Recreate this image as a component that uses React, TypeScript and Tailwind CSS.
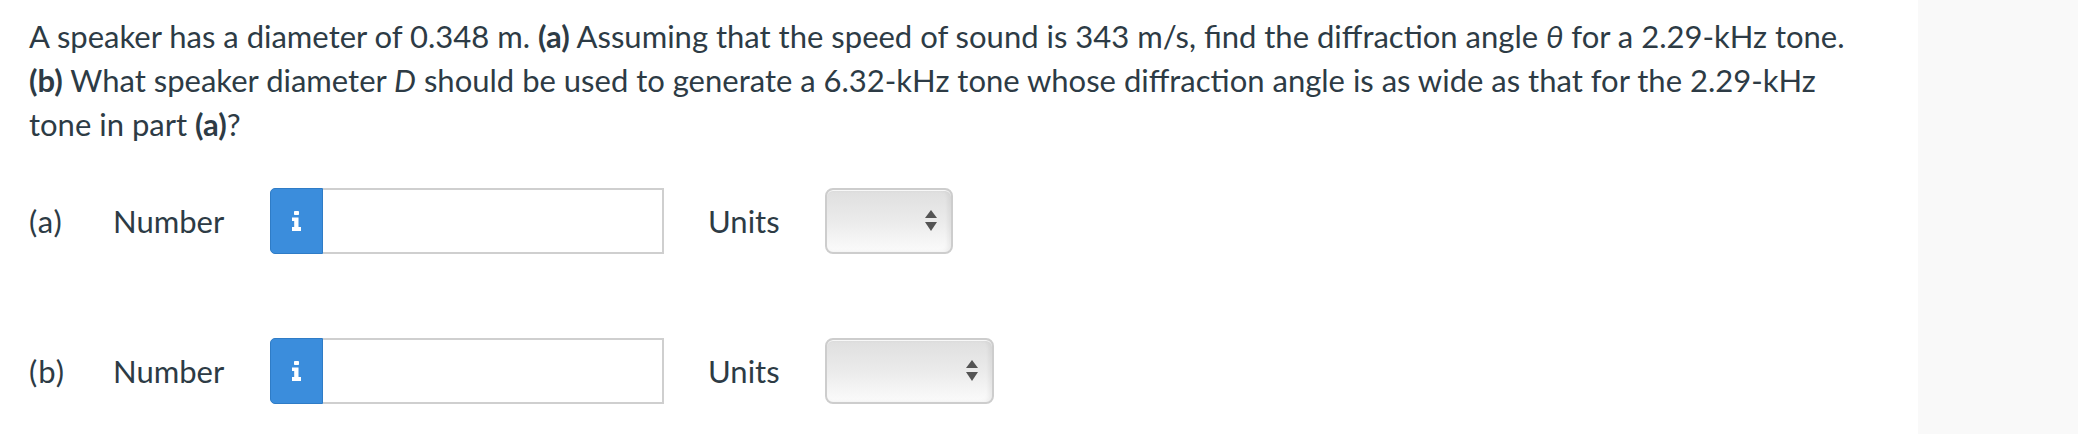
import React from "react";

function InfoGlyph() {
  return (
    <svg width="11" height="20" viewBox="0 0 11 20" fill="white" aria-hidden="true">
      <rect x="3" y="0" width="5" height="4" rx="0.8" />
      <path d="M1 6.5 H7.5 V16 H10 V20 H1 V16 H3.2 V10 H1 Z" />
    </svg>
  );
}

function SelectArrows() {
  return (
    <svg width="12" height="22" viewBox="0 0 12 22" fill="#545454" aria-hidden="true">
      <path d="M6 0 L12 8 H0 Z" />
      <path d="M0 12 H12 L6 21 Z" />
    </svg>
  );
}

function AnswerRow({ part, selectWidth }: { part: string; selectWidth: string }) {
  return (
    <div className="flex items-center h-[66px]">
      <span className="w-[84px] tracking-[1px]">({part})</span>
      <span className="w-[157px]">Number</span>
      <div className="flex h-[66px]">
        <button
          type="button"
          className="flex w-[53px] items-center justify-center rounded-l-[5px] border border-[#2f7cc6] bg-[#3b8ddc]"
        >
          <InfoGlyph />
        </button>
        <input
          type="text"
          className="w-[341px] border-2 border-l-0 border-[#cfcfcf] bg-white outline-none"
        />
      </div>
      <span className="ml-[44px] w-[117px]">Units</span>
      <div
        className={`${selectWidth} flex h-[66px] items-center justify-end rounded-[8px] border-2 border-[#cdcdcd] bg-gradient-to-b from-[#dfdfdf] via-[#ebebeb] to-[#fbfbfb] pr-[14px] shadow-[inset_0_1px_0_rgba(255,255,255,0.8),inset_-3px_0_4px_rgba(0,0,0,0.06)]`}
      >
        <SelectArrows />
      </div>
    </div>
  );
}

export default function App() {
  return (
    <div className="flex min-h-[434px] w-full bg-white font-['Lato',sans-serif] text-[#2d3b45]">
      <div className="flex-1 pl-[29px] pt-[14px] text-[31px] leading-[44px]">
        <p className="pr-[60px]">
          A speaker has a diameter of 0.348 m. <b>(a)</b> Assuming that the speed of sound is 343 m/s, find the
          diffraction angle <i>θ</i> for a 2.29-kHz tone. <b>(b)</b> What speaker diameter <i>D</i> should be used to
          generate a 6.32-kHz tone whose diffraction angle is as wide as that for the 2.29-kHz tone in part{" "}
          <b>(a)</b>?
        </p>
        <div className="mt-[42px] flex flex-col gap-[84px]">
          <AnswerRow part="a" selectWidth="w-[128px]" />
          <AnswerRow part="b" selectWidth="w-[169px]" />
        </div>
      </div>
      <div className="w-[160px] shrink-0 bg-[#f9f9f9]" />
    </div>
  );
}
